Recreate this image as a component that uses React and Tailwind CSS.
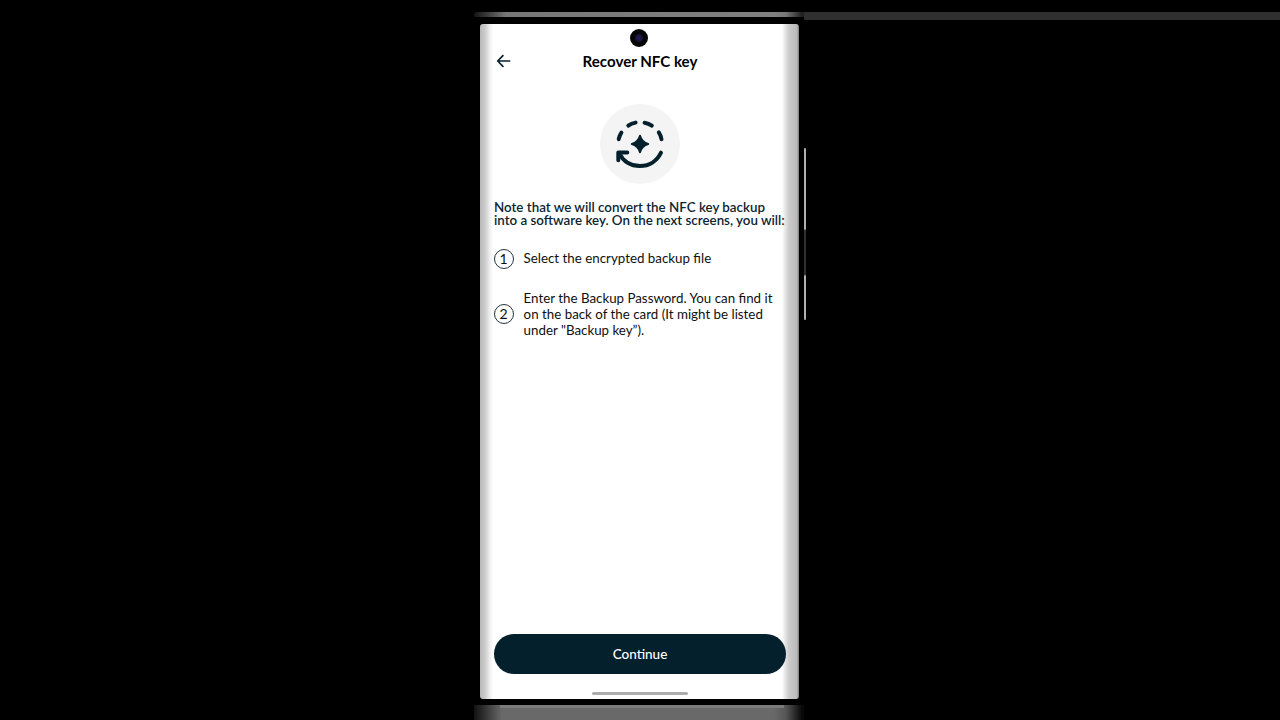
import React from "react";

function Header() {
  return (
    <header className="relative mt-[26px] flex h-[24px] items-center justify-center">
      <svg className="absolute left-[16px] top-[4px]" width="15" height="14" viewBox="0 0 15 14" fill="none" stroke="#06222f" strokeWidth="1.7" strokeLinecap="round" strokeLinejoin="round">
        <path d="M13.6 7H1.8M6.9 1.7L1.7 7L6.9 12.3" />
      </svg>
      <h1 className="ml-[1px] mb-[2px] whitespace-nowrap text-[15.1px] leading-[18px] font-bold text-black">Recover NFC key</h1>
    </header>
  );
}

function RecoverIcon() {
  return (
    <div className="mt-[30px] ml-[120px] size-[80px] shrink-0 rounded-full bg-[#f4f4f4]">
      <svg width="80" height="80" viewBox="0 0 80 80" fill="none" stroke="#04202c" strokeWidth="4" strokeLinecap="round" strokeLinejoin="round">
        <path d="M18.7 35.2Q19.4 31.5 21.4 28.6M28.3 21.6Q31.3 19.3 35.6 18.6M44.6 18.7Q48.7 19.3 51.8 21.6M58.8 28.4Q61 31.6 61.5 35.2" />
        <path d="M61 48.7C57 57 49 62 40 62C31 62 23.5 57.5 19.4 49.6" />
        <path d="M18.3 56.2V48.4H27.3" />
        <path d="M40 31.8Q41.8 38.2 48.2 40Q41.8 41.8 40 48.2Q38.2 41.8 31.8 40Q38.2 38.2 40 31.8Z" fill="#04202c" strokeWidth="2" />
      </svg>
    </div>
  );
}

function Step({ number, lines, className, textClassName = "" }) {
  return (
    <li className={"flex items-center gap-[10px] " + className}>
      <span className="flex size-[20px] shrink-0 items-center justify-center rounded-full border border-[#20333d] text-[14px] leading-none text-[#101010]">{number}</span>
      <span className={"whitespace-nowrap text-[13.33px] leading-[16px] text-[#101010] " + textClassName}>
        {lines.map((line) => (
          <span key={line} className="block">{line}</span>
        ))}
      </span>
    </li>
  );
}

export default function App() {
  return (
    <main className="relative flex h-[720px] w-[1280px] justify-center overflow-hidden bg-black font-['Lato','Carlito',sans-serif]">
      <div className="absolute left-[804px] top-[12px] h-[8px] w-[476px] bg-[#2f2f2f]" />
      <div className="absolute left-[474px] top-[12px] h-[5px] w-[330px] rounded-tl-[3px] bg-linear-[90deg,#141414_0px,#363636_12px,#777_32px,#808080_300px,#777_312px,#202020_328px]" />
      <div className="absolute left-[474px] top-[705px] h-[15px] w-[330px] bg-linear-[90deg,#111_0px,#303030_10px,#696969_28px,#696969_300px,#555_312px,#080808_328px]" />
      <div className="absolute left-[500px] top-[705px] h-[3px] w-[284px] bg-[#7b7b7b]" />
      <div className="absolute left-[474px] top-[17px] h-[688px] w-[330px] rounded-[4px] bg-black" />
      <div className="absolute left-[804px] top-[148px] h-[82px] w-[2px] rounded-full bg-[#b0b0b0]" />
      <div className="absolute left-[804px] top-[230px] h-[45px] w-[2px] bg-[#303030]" />
      <div className="absolute left-[804px] top-[275px] h-[45px] w-[2px] rounded-full bg-[#b0b0b0]" />

      <section className="relative mt-[24px] mr-[1px] flex h-[675px] w-[319px] flex-col overflow-hidden rounded-[3px] bg-linear-[90deg,#b9b9b9_0px,#cbcbcb_5px,#f0f0f0_10px,#fff_13px,#fff_302px,#eee_304px,#cbcbcb_309px,#bababa_317px,#777_319px]">
        <div className="absolute left-[150px] top-[5px] flex size-[18px] items-center justify-center rounded-full bg-[#050506]">
          <div className="size-[8px] rounded-full bg-radial from-[#2a1b60] to-[#0d0c1d]" />
        </div>
        <Header />
        <RecoverIcon />
        <p className="mt-[17px] ml-[14px] whitespace-nowrap text-[13.35px] leading-[13.33px] font-semibold text-[#0c2531]">
          <span className="block">Note that we will convert the NFC key backup</span>
          <span className="block">into a software key. On the next screens, you will:</span>
        </p>
        <ol className="ml-[13.6px]">
          <Step className="mt-[21px]" textClassName="mb-[2px]" number="1" lines={["Select the encrypted backup file"]} />
          <Step className="mt-[21px]" number="2" lines={["Enter the Backup Password. You can find it", "on the back of the card (It might be listed", "under \"Backup key”)."]} />
        </ol>
        <button className="mt-auto mb-[18px] ml-[14px] h-[40px] w-[292px] shrink-0 rounded-full bg-[#04202c] pt-[2px] text-[13.5px] leading-none font-medium text-white">Continue</button>
        <div className="mb-[4px] ml-[112px] h-[3px] w-[96px] shrink-0 rounded-full bg-[#adadad]" />
      </section>
    </main>
  );
}
